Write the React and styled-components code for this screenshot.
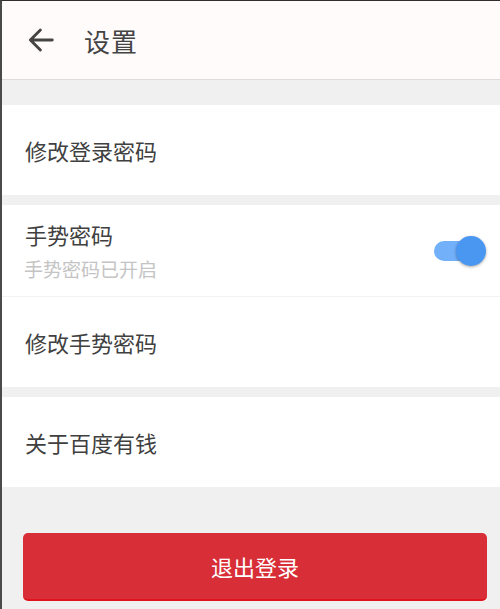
import React, { useState } from 'react';
import styled, { createGlobalStyle } from 'styled-components';

const GlobalStyle = createGlobalStyle`
  html, body {
    margin: 0;
    padding: 0;
    background: #f0f0f0;
  }
  body {
    font-family: "Noto Sans CJK SC", "Noto Sans", sans-serif;
  }
`

const Frame = styled.div`
  box-sizing: border-box;
  min-height: 609px;
  border-top: 1px solid #2e2e2e;
  border-left: 2px solid #4a4a4a;
  background: #f0f0f0;
  display: flex;
  flex-direction: column;
`

const Header = styled.div`
  height: 78px;
  display: flex;
  flex-direction: row;
  align-items: center;
  gap: 28px;
  padding-left: 24px;
  background-color: #fffbfb;
  border-bottom: 1px solid #dcdcdc;
`

const BackButton = styled.div`
  width: 30px;
  height: 30px;
  display: flex;
  align-items: center;
  justify-content: center;
  color: #444;
  cursor: pointer;
`

const Title = styled.span`
  font-size: 26px;
  color: #444;
  letter-spacing: 1px;
`

const Content = styled.div`
  display: flex;
  flex-direction: column;
  gap: 10px;
  padding-top: 25px;
`

const Group = styled.div`
  background: #fff;
  display: flex;
  flex-direction: column;
`

const Row = styled.div`
  box-sizing: border-box;
  height: ${props => props.divider ? '92px' : '90px'};
  display: flex;
  flex-direction: row;
  align-items: center;
  justify-content: space-between;
  padding: 0 14px 0 23px;
  border-bottom: ${props => props.divider ? '1px solid #f2f2f2' : 'none'};
`

const Texts = styled.div`
  display: flex;
  flex-direction: column;
  gap: 10px;
`

const Label = styled.span`
  font-size: 22px;
  color: #404040;
  line-height: 26px;
`

const SubLabel = styled.span`
  font-size: 19px;
  color: #c4c4c4;
  line-height: 24px;
  margin-left: -1px;
`

const Switch = styled.div`
  position: relative;
  width: 52px;
  height: 30px;
  cursor: pointer;
`

const Track = styled.div`
  position: absolute;
  left: 0;
  right: 6px;
  top: 5px;
  height: 20px;
  border-radius: 10px;
  background: ${props => props.on ? '#72b0fa' : '#cfcfcf'};
`

const Knob = styled.div`
  position: absolute;
  top: 0;
  left: ${props => props.on ? '22px' : '0'};
  width: 30px;
  height: 30px;
  border-radius: 50%;
  background: ${props => props.on ? '#4a97f2' : '#f5f5f5'};
  box-shadow: 0 1px 3px rgba(0, 0, 0, 0.35);
`

const Footer = styled.div`
  padding: 46px 13px 0 21px;
`

const LogoutButton = styled.button`
  width: 100%;
  height: 68px;
  border: none;
  border-bottom: 2px solid #e0141e;
  border-radius: 5px;
  background: #d82e37;
  color: #fff;
  font-family: "Noto Sans CJK SC", sans-serif;
  font-size: 22px;
  cursor: pointer;
`

function App() {
  const [gesture, setGesture] = useState(true)

  return (
    <Frame>
      <GlobalStyle />
      <Header>
        <BackButton>
          <svg width="30" height="30" viewBox="0 0 24 24">
            <path d="M21 12H3.5M11.5 4l-8 8 8 8" fill="none" stroke="currentColor" strokeWidth="2.3" strokeLinecap="round" strokeLinejoin="round" />
          </svg>
        </BackButton>
        <Title>设置</Title>
      </Header>
      <Content>
        <Group>
          <Row><Label>修改登录密码</Label></Row>
        </Group>
        <Group>
          <Row divider>
            <Texts>
              <Label>手势密码</Label>
              <SubLabel>手势密码已开启</SubLabel>
            </Texts>
            <Switch onClick={() => setGesture(!gesture)}>
              <Track on={gesture} />
              <Knob on={gesture} />
            </Switch>
          </Row>
          <Row><Label>修改手势密码</Label></Row>
        </Group>
        <Group>
          <Row><Label>关于百度有钱</Label></Row>
        </Group>
      </Content>
      <Footer>
        <LogoutButton>退出登录</LogoutButton>
      </Footer>
    </Frame>
  );
}

export default App;
